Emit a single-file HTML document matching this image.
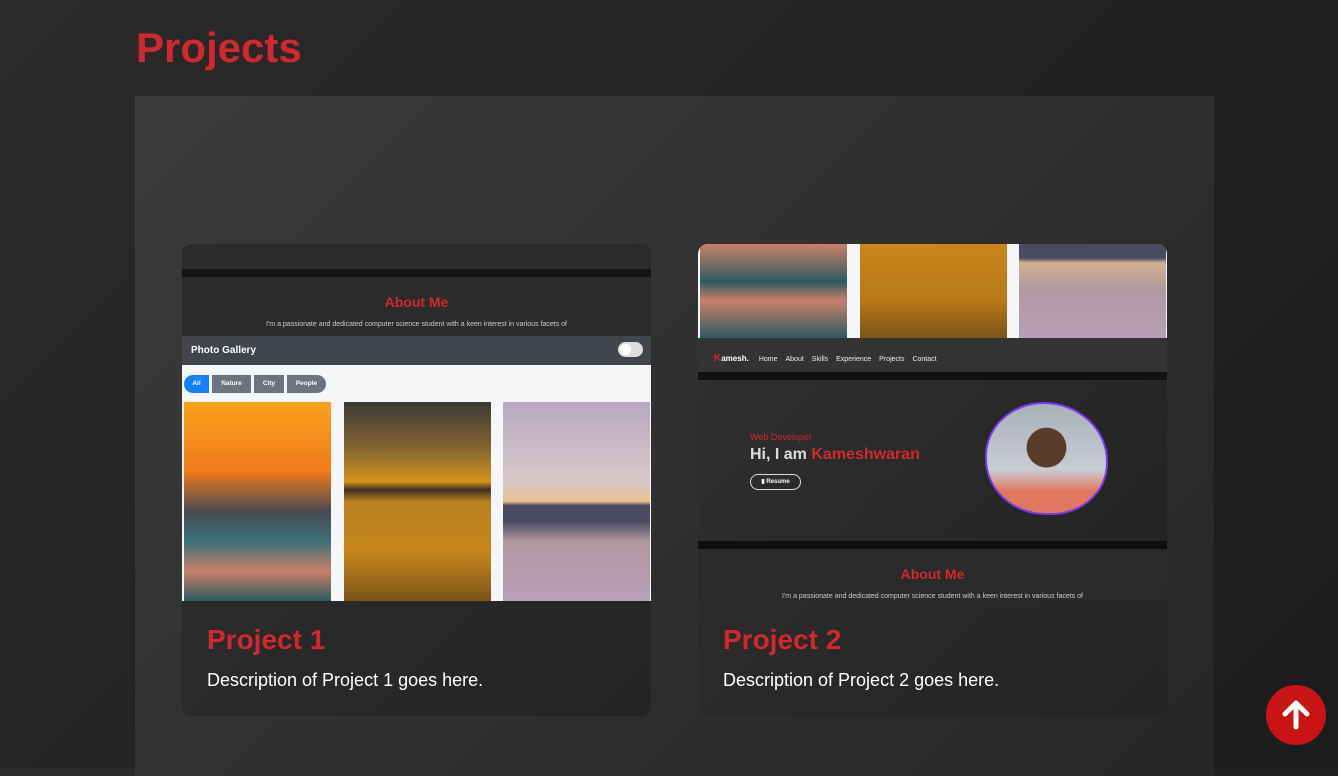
<!DOCTYPE html>
<html><head><style>
*{margin:0;padding:0;box-sizing:border-box}
body{width:1338px;height:768px;overflow:hidden;background:linear-gradient(135deg,#2a2a2a,#1c1c1c);font-family:"Liberation Sans",sans-serif;position:relative}
h1{position:absolute;left:136px;top:24px;font-size:42px;color:#d0282e;font-weight:bold}
.wrap{position:absolute;left:135px;top:96px;width:1079px;height:680px;background:linear-gradient(135deg,#3a3a3a,#262626)}
.card{position:absolute;top:244px;width:469px;height:472px;border-radius:10px;overflow:hidden;background:linear-gradient(135deg,#2f2f2f,#242424)}
.img{position:absolute;left:0;top:0;width:469px;height:357px;overflow:hidden}
.card h2{position:absolute;left:25px;top:380px;font-size:28px;color:#d0282e}
.card p{position:absolute;left:25px;top:426px;font-size:18px;color:#fff}
.abs{position:absolute}
.p1{background:linear-gradient(180deg,#f9a21c 0%,#f07a1c 35%,#4a4a52 55%,#3c7078 70%,#c8806a 85%,#2c5a60 100%)}
.p2{background:linear-gradient(180deg,#3a3a35 0%,#8a6a30 25%,#d8941c 40%,#403020 44%,#b88020 50%,#c8861c 75%,#7a5418 100%)}
.p3{background:linear-gradient(180deg,#b8a8c0 0%,#d8c8c8 40%,#e8c090 50%,#4a4a60 52%,#4a4a60 60%,#b098a0 70%,#b8a0b8 100%)}
.nav a{color:#eee;font-size:7px;margin-right:8px}
.btn{display:inline-block;font-size:6.5px;font-weight:bold;color:#fff;height:18px;line-height:18px;text-align:center;margin-right:3px;vertical-align:top}
</style></head><body>
<h1>Projects</h1>
<div class="wrap"></div>
<div class="card" style="left:182px">
 <div class="img" style="background:#2b2b2b">
  <div class="abs" style="top:25px;left:0;width:469px;height:8px;background:#151515"></div>
  <div class="abs" style="top:50px;width:469px;text-align:center;color:#d0282e;font-weight:bold;font-size:14px">About Me</div>
  <div class="abs" style="top:77px;width:469px;text-align:center;color:#ccc;font-size:7px">I'm a passionate and dedicated computer science student with a keen interest in various facets of</div>
  <div class="abs" style="top:92px;width:469px;height:29px;background:#42464c">
   <div class="abs" style="left:9px;top:9px;color:#fff;font-weight:bold;font-size:10px">Photo Gallery</div>
   <div class="abs" style="left:436px;top:6px;width:25px;height:15px;border-radius:8px;background:#ddd"><div style="width:11px;height:11px;border-radius:50%;background:#fff;margin:2px"></div></div>
  </div>
  <div class="abs" style="top:121px;width:469px;height:236px;background:#f5f6f8">
   <div class="abs" style="left:2px;top:10px;white-space:nowrap"><span class="btn" style="background:#1a7ef8;border-radius:9px 0 0 9px;width:25px">All</span><span class="btn" style="background:#6c757d;width:39px">Nature</span><span class="btn" style="background:#6c757d;width:30px">City</span><span class="btn" style="background:#6c757d;border-radius:0 9px 9px 0;width:39px">People</span></div>
   <div class="abs p1" style="left:2px;top:37px;width:147px;height:199px"></div>
   <div class="abs p2" style="left:162px;top:37px;width:147px;height:199px"></div>
   <div class="abs p3" style="left:321px;top:37px;width:147px;height:199px"></div>
  </div>
 </div>
 <h2>Project 1</h2><p>Description of Project 1 goes here.</p>
</div>
<div class="card" style="left:698px">
 <div class="img" style="background:#2a2a2a">
  <div class="abs" style="top:0;width:469px;height:94px;background:#f5f6f8">
   <div class="abs" style="left:2px;top:0;width:147px;height:94px;background:linear-gradient(180deg,#c8806a,#2c5a60 40%,#c8806a 60%,#2c5a60)"></div>
   <div class="abs" style="left:162px;top:0;width:147px;height:94px;background:linear-gradient(180deg,#c8861c,#b87818 60%,#7a5418)"></div>
   <div class="abs" style="left:321px;top:0;width:147px;height:94px;background:linear-gradient(180deg,#4a4a60,#4a4a60 15%,#d0b090 20%,#b098a0 50%,#b8a0b8)"></div>
  </div>
  <div class="abs" style="top:94px;width:469px;height:34px;background:#333">
   <div class="abs nav" style="left:16px;top:10px"><span style="color:#e02020;font-weight:bold;font-size:10px">K</span><span style="color:#fff;font-weight:bold;font-size:8px;margin-right:10px">amesh.</span><a>Home</a><a>About</a><a>Skills</a><a>Experience</a><a>Projects</a><a>Contact</a></div>
  </div>
  <div class="abs" style="top:128px;width:469px;height:8px;background:#111"></div>
  <div class="abs" style="top:136px;width:469px;height:161px;background:linear-gradient(135deg,#2f2f2f,#232323)">
   <div class="abs" style="left:52px;top:52px;color:#d0282e;font-size:9px">Web Developer</div>
   <div class="abs" style="left:52px;top:66px;color:#ddd;font-size:16px;font-weight:bold">Hi, I am <span style="color:#d0282e">Kameshwaran</span></div>
   <div class="abs" style="left:52px;top:94px;width:51px;height:16px;border:1px solid #ddd;border-radius:8px;color:#fff;font-size:6px;font-weight:bold;text-align:center;line-height:14px">▮ Resume</div>
   <div class="abs" style="left:287px;top:22px;width:123px;height:113px;border:2px solid #7a3af0;border-radius:50% 55% 48% 52%;background:radial-gradient(circle at 50% 40%,#5a3a2a 0 22%,transparent 23%),linear-gradient(180deg,#a8b0b8 0%,#c8ccd4 60%,#e07860 80%)"></div>
  </div>
  <div class="abs" style="top:297px;width:469px;height:8px;background:#0e0e0e"></div>
  <div class="abs" style="top:322px;width:469px;text-align:center;color:#d0282e;font-weight:bold;font-size:14px">About Me</div>
  <div class="abs" style="top:349px;width:469px;text-align:center;color:#ccc;font-size:7px">I'm a passionate and dedicated computer science student with a keen interest in various facets of</div>
 </div>
 <h2>Project 2</h2><p>Description of Project 2 goes here.</p>
</div>
<div class="abs" style="left:1266px;top:685px;width:60px;height:60px;border-radius:50%;background:#c81414">
 <svg width="60" height="60" viewBox="0 0 60 60"><path d="M30 42V19M19 29l11-11 11 11" stroke="#fff" stroke-width="5" fill="none" stroke-linecap="round" stroke-linejoin="round"/></svg>
</div>
</body></html>
